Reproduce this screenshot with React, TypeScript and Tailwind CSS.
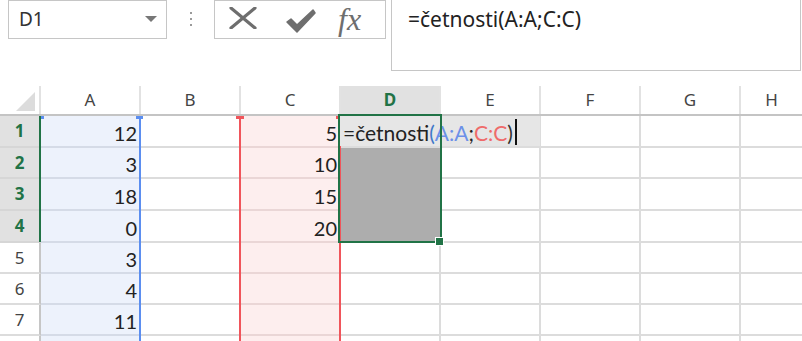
import React from "react";

type Row = { n: number; h: string; a: string; c: string; sel: boolean };

const rows: Row[] = [
  { n: 1, h: "h-[32px]", a: "12", c: "5", sel: true },
  { n: 2, h: "h-[31px]", a: "3", c: "10", sel: true },
  { n: 3, h: "h-[32px]", a: "18", c: "15", sel: true },
  { n: 4, h: "h-[32px]", a: "0", c: "20", sel: true },
  { n: 5, h: "h-[31px]", a: "3", c: "", sel: false },
  { n: 6, h: "h-[31px]", a: "4", c: "", sel: false },
  { n: 7, h: "h-[31px]", a: "11", c: "", sel: false },
  { n: 8, h: "h-[31px]", a: "", c: "", sel: false },
];

const cols = ["A", "B", "C", "D", "E", "F", "G", "H"];

function Num({ v }: { v: string }) {
  return (
    <div className="h-full flex items-end justify-end pr-[2px] pb-[2px] text-[20px] leading-[22px] text-[#222] font-['Lato',sans-serif]">
      {v}
    </div>
  );
}

export default function App() {
  return (
    <div className="w-[802px] h-[341px] bg-white overflow-hidden relative font-['Noto_Sans',sans-serif]">
      {/* top bar */}
      <div className="flex items-start h-[86px]">
        <div className="ml-[8px] w-[159px] h-[39px] border border-[#c6c6c6] flex items-center pl-[10px] pr-[9px] justify-between">
          <span className="text-[19px] text-[#333] leading-none">D1</span>
          <svg width="12" height="7" viewBox="0 0 12 7">
            <polygon points="0,0 12,0 6,6" fill="#777" />
          </svg>
        </div>
        <div className="w-[47px] flex flex-col items-center pt-[12px] gap-[4px]">
          <div className="w-[2px] h-[2px] bg-[#9a9a9a]" />
          <div className="w-[2px] h-[2px] bg-[#9a9a9a]" />
          <div className="w-[2px] h-[2px] bg-[#9a9a9a]" />
        </div>
        <div className="w-[172px] h-[39px] border border-[#c6c6c6] relative">
          <svg className="absolute left-[14px] top-[6px]" width="28" height="22" viewBox="0 0 28 22">
            <path d="M2 1 L26 21 M26 1 L2 21" stroke="#6e6e6e" strokeWidth="3.2" strokeLinecap="round" />
          </svg>
          <svg className="absolute left-[70px] top-[7px]" width="32" height="26" viewBox="0 0 32 26">
            <path d="M2 14 L6 11 L12 17 L28 2 L30 5 L12 24 Z" fill="#6e6e6e" stroke="#6e6e6e" strokeWidth="1.5" strokeLinejoin="round" />
          </svg>
          <span className="absolute left-[123px] top-0 text-[32px] leading-[36px] italic text-[#6e6e6e] font-['Liberation_Serif',serif]">
            fx
          </span>
        </div>
        <div className="ml-[5px] mr-[1px] flex-1 h-[71px] border-l border-r border-b border-[#c6c6c6] pl-[16px] pt-[5px]">
          <span className="text-[21px] leading-[28px] text-[#222]">=četnosti(A:A;C:C)</span>
        </div>
      </div>

      {/* header row */}
      <div className="flex h-[30px] border-b-2 border-[#c4c4c4]">
        <div className="w-[41px] border-r-2 border-[#e2e2e2] relative">
          <svg className="absolute left-[16px] top-[6px]" width="20" height="20" viewBox="0 0 20 20">
            <polygon points="19,0 19,19 0,19" fill="#dcdcdc" />
          </svg>
        </div>
        {cols.map((c) =>
          c === "D" ? (
            <div key={c} className="w-[100px] border-r-2 border-[#e2e2e2] bg-[#e1e1e1] flex items-center justify-center text-[17px] font-bold text-[#217346]">
              {c}
            </div>
          ) : c === "H" ? (
            <div key={c} className="flex-1 flex items-center justify-center text-[17px] text-[#444]">
              {c}
            </div>
          ) : (
            <div key={c} className="w-[100px] border-r-2 border-[#e2e2e2] flex items-center justify-center text-[17px] text-[#444]">
              {c}
            </div>
          )
        )}
      </div>

      {/* body */}
      <div className="relative">
        {rows.map((r) => (
          <div key={r.n} className={`flex ${r.h}`}>
            {r.sel ? (
              <div className="w-[41px] border-b-2 border-r-2 border-[#d6d6d6] bg-[#e1e1e1] flex items-center justify-center text-[17px] font-bold text-[#217346]">
                {r.n}
              </div>
            ) : (
              <div className="w-[41px] border-b-2 border-r-2 border-b-[#dcdcdc] border-r-[#c6c6c6] flex items-center justify-center text-[17px] text-[#444]">
                {r.n < 8 ? r.n : ""}
              </div>
            )}
            <div className="w-[100px] border-b-2 border-r-2 border-[#d5dbe7] bg-[#edf2fc]">
              <Num v={r.a} />
            </div>
            <div className="w-[100px] border-b-2 border-r-2 border-[#dcdcdc]" />
            <div className="w-[100px] border-b-2 border-r-2 border-[#ead6d6] bg-[#fdeeee]">
              <Num v={r.c} />
            </div>
            {r.sel && r.n > 1 ? (
              <div className="w-[100px] border-r-2 border-[#adadad] bg-[#adadad]" />
            ) : (
              <div className="w-[100px] border-b-2 border-r-2 border-[#dcdcdc]" />
            )}
            <div className="w-[100px] border-b-2 border-r-2 border-[#dcdcdc]" />
            <div className="w-[100px] border-b-2 border-r-2 border-[#dcdcdc]" />
            <div className="w-[100px] border-b-2 border-r-2 border-[#dcdcdc]" />
            <div className="flex-1 border-b-2 border-[#dcdcdc]" />
          </div>
        ))}

        {/* range highlights */}
        <div className="absolute left-[139px] top-0 bottom-0 w-[2px] bg-[#5b8ef0]" />
        <div className="absolute left-[41px] top-0 w-[3px] h-[3px] bg-[#5b8ef0]" />
        <div className="absolute left-[136px] top-0 w-[7px] h-[3px] bg-[#5b8ef0]" />
        <div className="absolute left-[239px] top-0 bottom-0 w-[2px] bg-[#f0555b]" />
        <div className="absolute left-[339px] top-0 bottom-0 w-[2px] bg-[#f0555b]" />
        <div className="absolute left-[236px] top-0 w-[8px] h-[3px] bg-[#f0555b]" />
        <div className="absolute left-[336px] top-0 w-[6px] h-[3px] bg-[#f0555b]" />

        {/* row header green line */}
        <div className="absolute left-[39px] top-0 w-[2px] h-[126px] bg-[#217346]" />

        {/* in-cell editor */}
        <div className="absolute left-[340px] top-0 w-[200px] h-[30px] bg-[#e6e6e6] flex items-end pl-[3px] pb-[2px]">
          <span className="text-[21px] leading-[23px] text-[#222] font-['Lato',sans-serif] whitespace-nowrap">
            =četnosti<span className="text-[#3f78c9]">(</span>
            <span className="text-[#6c90e8]">A:A</span>;<span className="text-[#ef6b6b]">C:C</span>
            <span className="text-[#333]">)</span>
          </span>
          <div className="ml-[2px] mb-[-1px] w-[2px] h-[26px] bg-[#111]" />
        </div>

        {/* selection box */}
        <div className="absolute left-[338px] top-[-2px] w-[104px] h-[129px] border-2 border-[#217346]" />
        <div className="absolute left-[435px] top-[121px] w-[9px] h-[9px] bg-[#217346] border border-white" />
      </div>
    </div>
  );
}
